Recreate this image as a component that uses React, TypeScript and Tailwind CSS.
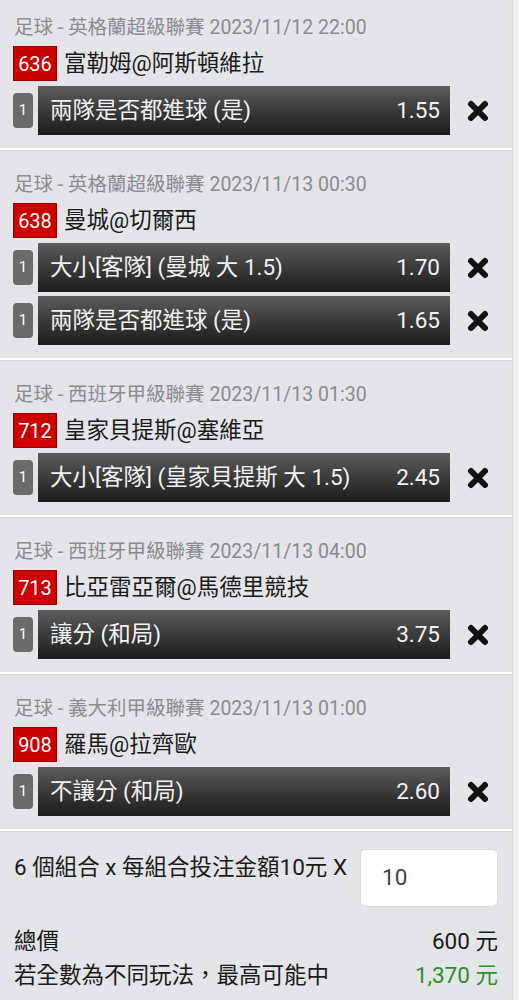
type Bet = { label: string; odds: string };
type Match = { league: string; time: string; no: string; teams: string; bets: Bet[] };

const matches: Match[] = [
  { league: '英格蘭超級聯賽', time: '2023/11/12 22:00', no: '636', teams: '富勒姆@阿斯頓維拉', bets: [{ label: '兩隊是否都進球 (是)', odds: '1.55' }] },
  {
    league: '英格蘭超級聯賽',
    time: '2023/11/13 00:30',
    no: '638',
    teams: '曼城@切爾西',
    bets: [
      { label: '大小[客隊] (曼城 大 1.5)', odds: '1.70' },
      { label: '兩隊是否都進球 (是)', odds: '1.65' },
    ],
  },
  { league: '西班牙甲級聯賽', time: '2023/11/13 01:30', no: '712', teams: '皇家貝提斯@塞維亞', bets: [{ label: '大小[客隊] (皇家貝提斯 大 1.5)', odds: '2.45' }] },
  { league: '西班牙甲級聯賽', time: '2023/11/13 04:00', no: '713', teams: '比亞雷亞爾@馬德里競技', bets: [{ label: '讓分 (和局)', odds: '3.75' }] },
  { league: '義大利甲級聯賽', time: '2023/11/13 01:00', no: '908', teams: '羅馬@拉齊歐', bets: [{ label: '不讓分 (和局)', odds: '2.60' }] },
];

function RemoveIcon() {
  return (
    <svg width="24" height="24" viewBox="0 0 24 24">
      <path d="M5 5 L19 19 M19 5 L5 19" stroke="#111" strokeWidth="6" strokeLinecap="round" />
    </svg>
  );
}

function MatchCard({ m, first }: { m: Match; first: boolean }) {
  return (
    <div className={`border-b-2 border-white pb-[13px] ${first ? 'pt-[16px]' : 'pt-[22px] border-t border-t-[#d7d8dc]'}`}>
      <p className="pl-[14px] text-[19.5px] leading-[24px] text-[#8b8b8d]">
        足球 - {m.league} {m.time}
      </p>
      <div className="mt-[6px] flex items-center gap-[7px] pl-[13px]">
        <span className="flex h-[35px] w-[44px] items-center justify-center border border-[#a00000] bg-[#cc0000] text-[20px] text-white">
          {m.no}
        </span>
        <span className="text-[22.5px] text-[#1a1a1a]">{m.teams}</span>
      </div>
      <div className="mt-[5px] flex flex-col gap-[4px]">
        {m.bets.map((b) => (
          <div key={b.label} className="flex items-center pl-[13px]">
            <span className="flex h-[35px] w-[20px] items-center justify-center rounded-[4px] bg-[#6b6b6b] text-[15px] text-white">
              1
            </span>
            <div className="ml-[5px] flex h-[49px] w-[412px] items-center justify-between bg-gradient-to-b from-[#5c5c5c] to-[#1c1c1c] pl-[12px] pr-[10px] text-[22.5px] text-[#f2f2f2]">
              <span>{b.label}</span>
              <span>{b.odds}</span>
            </div>
            <div className="flex w-[56px] justify-center">
              <RemoveIcon />
            </div>
          </div>
        ))}
      </div>
    </div>
  );
}

export default function App() {
  return (
    <div className="min-h-[1000px] bg-[#eeeef0]" style={{ fontFamily: 'Roboto, "Noto Sans CJK TC", sans-serif' }}>
      <div className="min-h-[1000px] w-[513px] border-r border-[#d9dade] bg-[#e4e5e9]">
        {matches.map((m, i) => (
          <MatchCard key={m.no} m={m} first={i === 0} />
        ))}
        <div className="border-t border-[#d7d8dc] px-[14px] pt-[17px]">
          <div className="flex items-start justify-between">
            <span className="mt-[3px] text-[22.5px] leading-[30px] text-[#1a1a1a]">6 個組合 x 每組合投注金額10元 X</span>
            <div className="flex h-[58px] w-[138px] items-center rounded-[6px] border border-[#dcdcdc] bg-white pl-[21px] text-[22.5px] text-[#444]">
              10
            </div>
          </div>
          <div className="mt-[18px] flex justify-between text-[22.5px] leading-[33px] text-[#1a1a1a]">
            <span>總價</span>
            <span>600 元</span>
          </div>
          <div className="flex justify-between text-[22.5px] leading-[34px] text-[#1a1a1a]">
            <span>若全數為不同玩法，最高可能中</span>
            <span className="text-[#2a8f2a]">1,370 元</span>
          </div>
        </div>
      </div>
    </div>
  );
}
